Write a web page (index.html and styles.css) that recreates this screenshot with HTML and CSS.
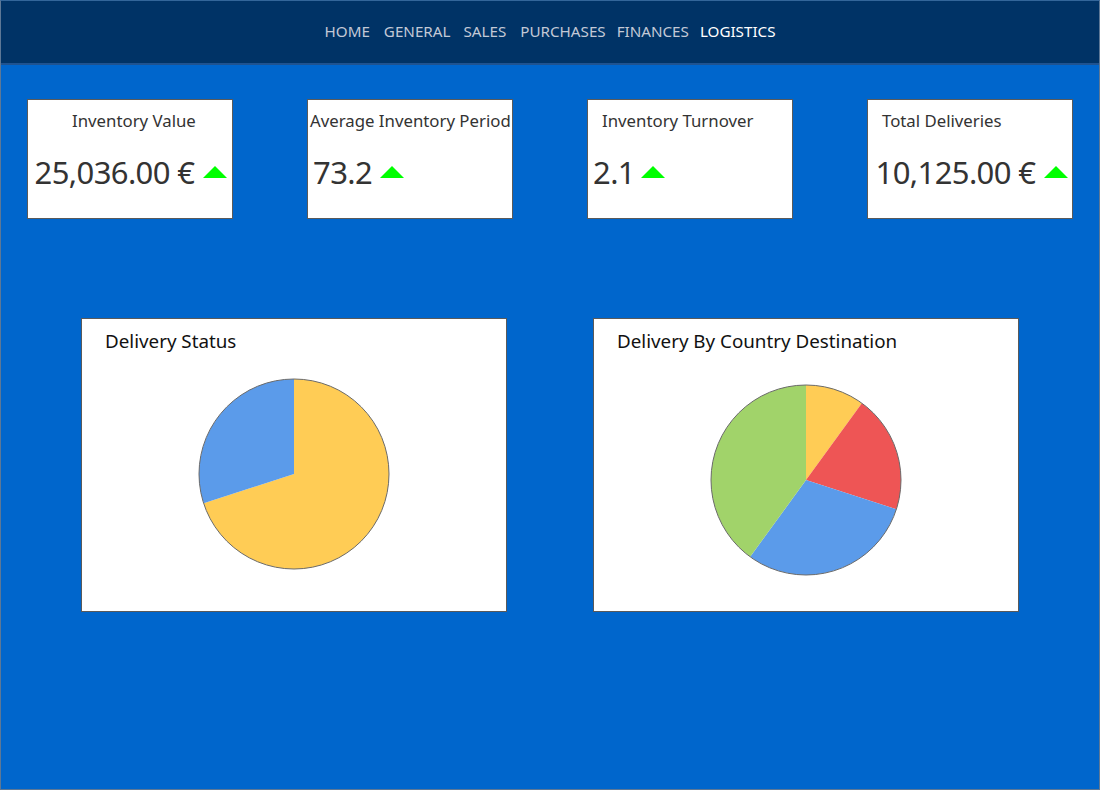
FILE: index.html
```html
<!DOCTYPE html>
<html lang="en">
<head>
<meta charset="utf-8">
<title>Logistics Dashboard</title>
<link rel="stylesheet" href="styles.css">
</head>
<body>
<div class="app">
  <header class="topbar">
    <nav class="nav">
      <a class="nav__item nav__item--home">HOME</a>
      <a class="nav__item nav__item--general">GENERAL</a>
      <a class="nav__item nav__item--sales">SALES</a>
      <a class="nav__item nav__item--purchases">PURCHASES</a>
      <a class="nav__item nav__item--finances">FINANCES</a>
      <a class="nav__item nav__item--active">LOGISTICS</a>
    </nav>
  </header>
  <main class="content">
    <section class="kpis">
      <div class="kpi kpi--one">
        <div class="kpi__title">Inventory Value</div>
        <div class="kpi__value"><span>25,036.00 €</span><i class="kpi__up"></i></div>
      </div>
      <div class="kpi kpi--two">
        <div class="kpi__title">Average Inventory Period</div>
        <div class="kpi__value"><span>73.2</span><i class="kpi__up"></i></div>
      </div>
      <div class="kpi kpi--three">
        <div class="kpi__title">Inventory Turnover</div>
        <div class="kpi__value"><span>2.1</span><i class="kpi__up"></i></div>
      </div>
      <div class="kpi kpi--four">
        <div class="kpi__title">Total Deliveries</div>
        <div class="kpi__value"><span>10,125.00 €</span><i class="kpi__up"></i></div>
      </div>
    </section>
    <section class="charts">
      <div class="chart">
        <div class="chart__title">Delivery Status</div>
        <svg class="chart__pie chart__pie--status" width="200" height="200" viewBox="-100 -100 200 200">
          <path d="M0 0 L0 -95 A95 95 0 1 1 -90.35 29.36 Z" fill="#FFCC55"/>
          <path d="M0 0 L-90.35 29.36 A95 95 0 0 1 0 -95 Z" fill="#5B9BEA"/>
          <circle cx="0" cy="0" r="95" fill="none" stroke="#6b6b6b" stroke-width="1"/>
        </svg>
      </div>
      <div class="chart">
        <div class="chart__title">Delivery By Country Destination</div>
        <svg class="chart__pie chart__pie--country" width="200" height="200" viewBox="-100 -100 200 200">
          <path d="M0 0 L0 -95 A95 95 0 0 1 55.84 -76.86 Z" fill="#FFCC55"/>
          <path d="M0 0 L55.84 -76.86 A95 95 0 0 1 90.35 29.36 Z" fill="#EE5555"/>
          <path d="M0 0 L90.35 29.36 A95 95 0 0 1 -55.84 76.86 Z" fill="#5B9BEA"/>
          <path d="M0 0 L-55.84 76.86 A95 95 0 0 1 0 -95 Z" fill="#A1D36A"/>
          <circle cx="0" cy="0" r="95" fill="none" stroke="#6b6b6b" stroke-width="1"/>
        </svg>
      </div>
    </section>
  </main>
</div>
</body>
</html>
```

FILE: styles.css
```css
* { box-sizing: border-box; }

html, body {
  margin: 0;
  padding: 0;
}

body {
  font-family: "Noto Sans", "Open Sans", sans-serif;
  background: #0066CC;
}

.app {
  width: 1100px;
  height: 790px;
  border: 1px solid #5d7896;
  border-top-color: #33669a;
  background: #0066CC;
  display: flex;
  flex-direction: column;
}

.topbar {
  height: 64px;
  background: #003366;
  border-bottom: 2px solid #1f5390;
  display: flex;
  justify-content: center;
  padding-top: 19px;
}

.nav {
  display: flex;
  align-items: center;
  height: 22px;
}

.nav__item {
  font-size: 15.2px;
  color: #c3c9d6;
  line-height: 22px;
  white-space: nowrap;
}

.nav__item--home { margin-right: 14px; }
.nav__item--general { margin-right: 13px; }
.nav__item--sales { margin-right: 14px; }
.nav__item--purchases { margin-right: 11px; }
.nav__item--finances { margin-right: 11px; }
.nav__item--active { color: #ffffff; }

.content {
  flex: 1;
  padding-top: 34px;
}

.kpis {
  display: flex;
  justify-content: space-between;
  padding: 0 26px;
}

.kpi {
  width: 206px;
  height: 120px;
  background: #ffffff;
  border: 1px solid #5a5a5a;
  color: #333333;
  overflow: hidden;
}

.kpi__title {
  font-size: 16.8px;
  line-height: 22px;
  margin-top: 10px;
  white-space: nowrap;
}

.kpi__value {
  display: flex;
  align-items: center;
  height: 40px;
  margin-top: 20px;
  font-size: 31px;
  letter-spacing: -0.6px;
  white-space: nowrap;
}

.kpi__up {
  display: block;
  width: 0;
  height: 0;
  border-left: 12px solid transparent;
  border-right: 12px solid transparent;
  border-bottom: 12px solid #00ff00;
  margin-left: 9px;
}

.kpi--one .kpi__title { padding-left: 44px; }
.kpi--one .kpi__value { justify-content: center; padding-left: 2px; }
.kpi--two .kpi__title { padding-left: 2px; }
.kpi--two .kpi__value { padding-left: 5px; }
.kpi--two .kpi__up { margin-left: 8px; }
.kpi--three .kpi__title { padding-left: 14px; }
.kpi--three .kpi__value { padding-left: 5px; }
.kpi--three .kpi__up { margin-left: 6px; }
.kpi--four .kpi__title { padding-left: 14px; }
.kpi--four .kpi__value { justify-content: center; padding-left: 4px; }

.charts {
  display: flex;
  gap: 86px;
  padding-left: 80px;
  margin-top: 99px;
}

.chart {
  width: 426px;
  height: 294px;
  background: #ffffff;
  border: 1px solid #5a5a5a;
  display: flex;
  flex-direction: column;
  align-items: center;
}

.chart__title {
  align-self: stretch;
  font-size: 18.8px;
  line-height: 24px;
  color: #111111;
  padding-left: 23px;
  margin-top: 10px;
}

.chart__pie { display: block; }
.chart__pie--status { margin-top: 21px; }
.chart__pie--country { margin-top: 27px; }
```
